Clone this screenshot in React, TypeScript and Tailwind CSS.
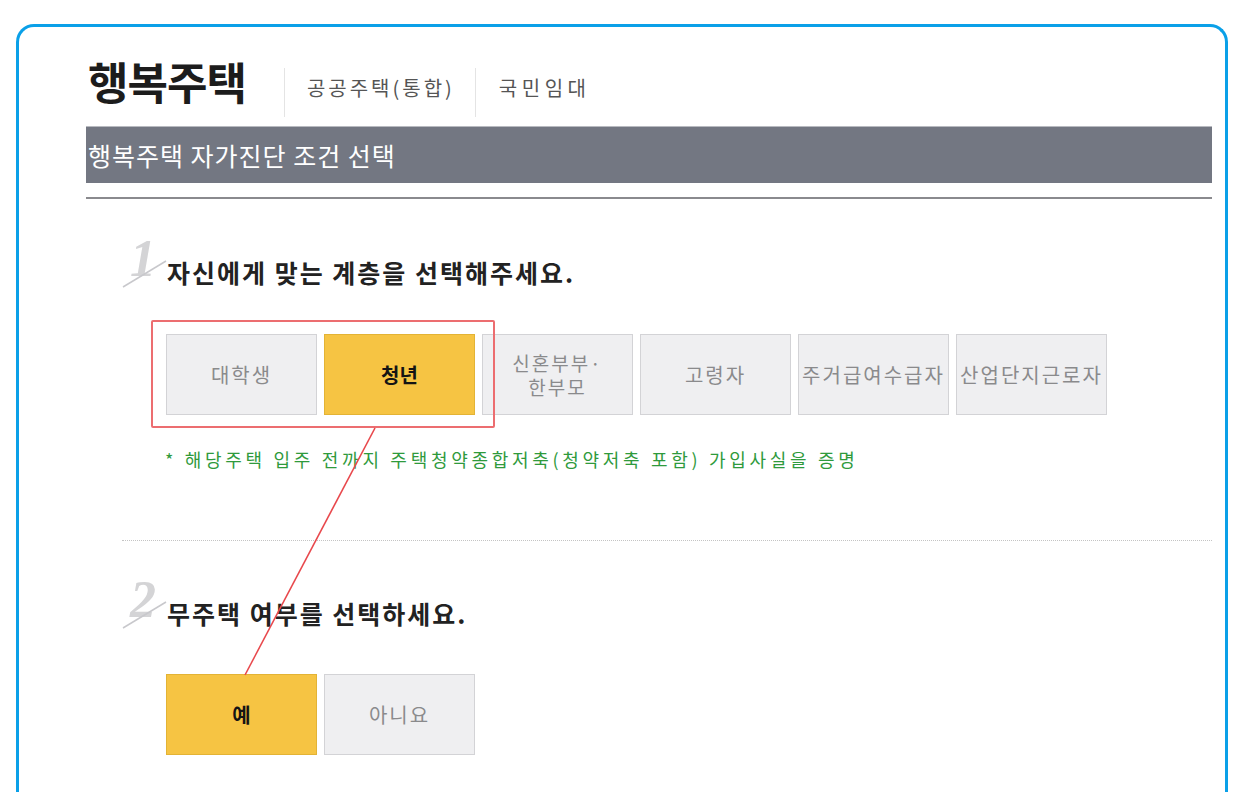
import React from "react";

const KR = { fontFamily: '"Noto Sans CJK KR", "Noto Sans", sans-serif' };

function Numeral({ n }: { n: string }) {
  return (
    <div className="relative w-[45px] h-[50px] shrink-0">
      <span
        className="absolute left-[8px] top-[-6px] text-[52px] leading-none italic font-bold text-[#d4d4d6]"
        style={{ fontFamily: '"Liberation Serif", serif' }}
      >
        {n}
      </span>
      <svg className="absolute left-0 top-0" width="45" height="50" viewBox="0 0 45 50">
        <line x1="1" y1="48" x2="44" y2="22" stroke="#c8c8cc" strokeWidth="1.5" />
      </svg>
    </div>
  );
}

function Btn({ label, active, lines }: { label?: string; active?: boolean; lines?: string[] }) {
  const base = "w-[151px] h-[81px] flex flex-col items-center justify-center border text-center";
  const cls = active
    ? `${base} bg-[#f6c443] border-[#e3b335] text-[#141414] font-bold text-[20px]`
    : `${base} bg-[#efeff1] border-[#d3d3d6] text-[#8a8a8c] text-[20px] tracking-[2px]`;
  return (
    <div className={cls} style={KR}>
      {lines ? (
        lines.map((l) => (
          <span key={l} className="block text-[19px] leading-[24px]">
            {l}
          </span>
        ))
      ) : (
        <span>{label}</span>
      )}
    </div>
  );
}

export default function App() {
  return (
    <div className="relative w-[1245px] h-[792px] overflow-hidden bg-white" style={KR}>
      <div className="ml-[16px] mt-[24px] w-[1212px] h-[800px] border-[3px] border-b-0 border-[#0aa0e8] rounded-t-[18px] pl-[67px] pr-[13px]">
        {/* header */}
        <div className="flex items-start h-[99px]">
          <div className="mt-[25px] pl-[2px] text-[44px] leading-[58px] font-bold text-[#1c1c1c] tracking-[-1px]">행복주택</div>
          <div className="ml-[38px] mt-[41px] w-px h-[49px] bg-[#e4e4e4]" />
          <div className="ml-[22px] mt-[47px] text-[20px] leading-[28px] text-[#555] tracking-[3px]">공공주택(통합)</div>
          <div className="ml-[20px] mt-[41px] w-px h-[49px] bg-[#e4e4e4]" />
          <div className="ml-[23px] mt-[47px] text-[20px] leading-[28px] text-[#555] tracking-[4.5px]">국민임대</div>
        </div>
        {/* gray bar */}
        <div className="h-[57px] bg-[#737782] border-t border-[#b8bac0] flex items-center pl-[2px]">
          <span className="text-[25px] text-white tracking-[1px] leading-none">행복주택 자가진단 조건 선택</span>
        </div>
        <div className="mt-[14px] h-[2px] bg-[#8a8a8e]" />

        {/* section 1 */}
        <div className="ml-[36px]">
          <div className="flex items-end mt-[40px] h-[50px]">
            <Numeral n="1" />
            <div className="text-[25px] leading-[34px] font-bold text-[#222] tracking-[2px]">자신에게 맞는 계층을 선택해주세요.</div>
          </div>
          <div className="flex gap-[7px] pl-[44px] mt-[45px]">
            <Btn label="대학생" />
            <Btn label="청년" active />
            <Btn lines={["신혼부부·", "한부모"]} />
            <Btn label="고령자" />
            <Btn label="주거급여수급자" />
            <Btn label="산업단지근로자" />
          </div>
          <div className="pl-[43px] mt-[32px] text-[18px] leading-[24px] text-[#2f9a3c] tracking-[3.7px]">
            * 해당주택 입주 전까지 주택청약종합저축(청약저축 포함) 가입사실을 증명
          </div>
          <div className="mt-[69px] border-t border-dotted border-[#c4c4c4]" />

          {/* section 2 */}
          <div className="flex items-end mt-[39px] h-[50px]">
            <Numeral n="2" />
            <div className="text-[25px] leading-[34px] font-bold text-[#222] tracking-[2px]">무주택 여부를 선택하세요.</div>
          </div>
          <div className="flex gap-[7px] pl-[44px] mt-[44px]">
            <Btn label="예" active />
            <Btn label="아니요" />
          </div>
        </div>
      </div>

      {/* annotation overlays */}
      <div className="absolute left-[151px] top-[320px] w-[344px] h-[108px] border-2 border-[#ec6d70] rounded-[2px]" />
      <svg className="absolute left-0 top-0 pointer-events-none" width="1245" height="792">
        <line x1="375" y1="428" x2="245" y2="675" stroke="#e8484c" strokeWidth="1.6" />
      </svg>
    </div>
  );
}
